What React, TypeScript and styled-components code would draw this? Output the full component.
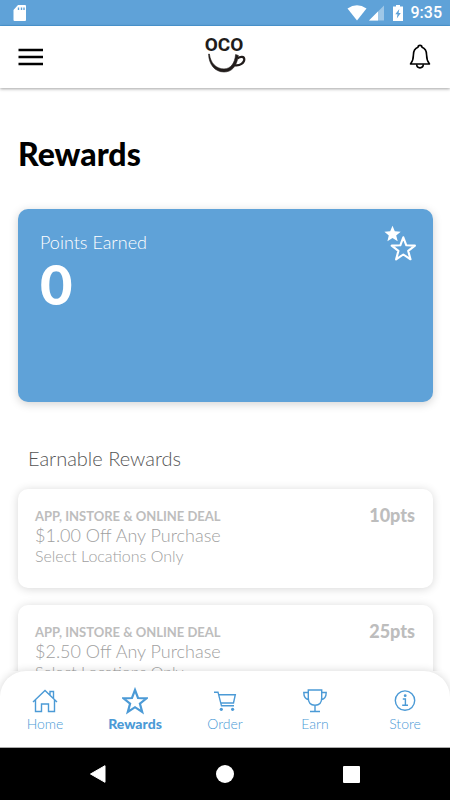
import React from "react";
import styled, { createGlobalStyle } from "styled-components";

const BLUE = "#5fa2d8";
const NAV_BLUE = "#4b9ad6";

const GlobalStyle = createGlobalStyle`
  * { box-sizing: border-box; }
  body {
    margin: 0;
    background: #fff;
    font-family: Lato, "Open Sans", sans-serif;
  }
  h1, h2, h3, p, ul { margin: 0; padding: 0; }
  button { border: 0; padding: 0; background: none; cursor: pointer; color: inherit; font: inherit; }
  svg { display: block; }
`;

const Screen = styled.div`
  display: flex;
  flex-direction: column;
  height: 100vh;
  overflow: hidden;
`;

const StatusBar = styled.div`
  flex: none;
  display: flex;
  align-items: center;
  justify-content: space-between;
  height: 26px;
  padding: 0 8px 0 12px;
  border-bottom: 1px solid ${NAV_BLUE};
  background: ${BLUE};
  color: #fff;
`;

const StatusIcons = styled.div`
  display: flex;
  align-items: center;
`;

const Clock = styled.time`
  margin-left: 6px;
  font: 500 16px/26px Roboto, sans-serif;
`;

const Header = styled.header`
  flex: none;
  display: grid;
  grid-template-columns: 1fr auto 1fr;
  align-items: center;
  height: 62px;
  padding: 0 18px;
  background: #fff;
  box-shadow: 0 1px 3px rgba(0, 0, 0, 0.36);
  z-index: 1;
`;

const IconButton = styled.button<{ $align?: "start" | "center" | "end" }>`
  justify-self: ${(p) => p.$align ?? "center"};
`;

const Main = styled.main`
  flex: 1;
  min-height: 0;
  overflow: hidden;
  padding: 48px 17px 0 18px;
`;

const Title = styled.h1`
  font-size: 32px;
  line-height: 36px;
  font-weight: 900;
  color: #000;
`;

const PointsCard = styled.section`
  display: flex;
  justify-content: space-between;
  align-items: flex-start;
  min-height: 193px;
  margin-top: 37px;
  padding: 16px 16px 16px 22px;
  border-radius: 10px;
  background: ${BLUE};
  color: #fff;
  box-shadow: 0 2px 10px rgba(0, 0, 0, 0.18);
`;

const PointsLabel = styled.h2`
  font-size: 18px;
  line-height: 34px;
  font-weight: 300;
`;

const PointsValue = styled.p`
  font-size: 56px;
  line-height: 50px;
  font-weight: 900;
`;

const SectionTitle = styled.h2`
  margin-top: 44px;
  padding-left: 10px;
  font-size: 20px;
  line-height: 24px;
  font-weight: 300;
  color: #555;
`;

const RewardList = styled.ul`
  display: flex;
  flex-direction: column;
  gap: 17px;
  margin-top: 19px;
  list-style: none;
`;

const RewardCard = styled.li`
  display: flex;
  justify-content: space-between;
  align-items: flex-start;
  min-height: 99px;
  padding: 17px 18px 17px 17px;
  border-radius: 10px;
  background: #fff;
  box-shadow: 0 1px 10px rgba(0, 0, 0, 0.16);
  color: #bdbdbd;
`;

const DealKind = styled.p`
  font-size: 13px;
  line-height: 20px;
  font-weight: 700;
`;

const DealName = styled.h3`
  font-size: 18px;
  line-height: 18px;
  font-weight: 300;
  color: #a0a0a0;
`;

const DealNote = styled.p`
  font-size: 16px;
  line-height: 24px;
  font-weight: 300;
  color: #a0a0a0;
`;

const DealPoints = styled.p`
  font-size: 18px;
  line-height: 18px;
  font-weight: 900;
`;

const TabBar = styled.nav`
  flex: none;
  display: grid;
  grid-template-columns: repeat(5, 1fr);
  height: 77px;
  padding-top: 16px;
  border-bottom: 1px solid #aaa;
  border-radius: 26px 26px 0 0;
  background: #fff;
  box-shadow: 0 0 8px rgba(0, 0, 0, 0.16);
  z-index: 1;
`;

const Tab = styled.a<{ $active?: boolean }>`
  display: flex;
  flex-direction: column;
  align-items: center;
  color: ${NAV_BLUE};
  text-decoration: none;
  font-size: 14px;
  line-height: 18px;
  font-weight: ${(p) => (p.$active ? 900 : 300)};
`;

const SystemBar = styled.div`
  flex: none;
  display: grid;
  grid-template-columns: repeat(3, 1fr);
  justify-items: center;
  align-items: center;
  height: 52px;
  padding: 0 35px;
  background: #000;
  color: #fff;
`;

const STAR = "M13 2 L16 10 L24.6 10.3 L17.9 15.6 L20.2 24 L13 19.2 L5.8 24 L8.1 15.6 L1.4 10.3 L10 10 Z";

const line = { fill: "none", stroke: "currentColor", strokeWidth: 1.4 };

const HomeIcon = () => (
  <svg width="26" height="28" viewBox="0 0 26 28" aria-hidden="true" {...line}>
    <path d="M1 15 L13 3.5 L25 15 M3.5 13 V24.5 H9.5 V17 H16.5 V24.5 H22.5 V13 M18 8 V4.5 H21.5 V11.5" />
  </svg>
);

const StarIcon = () => (
  <svg width="26" height="28" viewBox="0 0 26 28" aria-hidden="true" {...line} strokeWidth={2.2}>
    <path transform="translate(0 1)" d={STAR} />
  </svg>
);

const CartIcon = () => (
  <svg width="26" height="28" viewBox="0 0 26 28" aria-hidden="true" {...line}>
    <path d="M2 5.2 H6 L9.5 18.8 H22 M6.8 7.7 H23.3 L21.5 16 H9" />
    <circle cx="9.3" cy="22.3" r="1.6" fill="currentColor" stroke="none" />
    <circle cx="20.6" cy="22.3" r="1.6" fill="currentColor" stroke="none" />
  </svg>
);

const TrophyIcon = () => (
  <svg width="26" height="28" viewBox="0 0 26 28" aria-hidden="true" {...line}>
    <path d="M6.3 3 H19.7 V11 C19.7 15.5 17 18.2 13 18.2 C9 18.2 6.3 15.5 6.3 11 Z M13 18.2 V24.3 M8 24.5 H18 M6.3 5.5 H1.8 C1.8 9.5 3.4 12 6.6 12.7 M19.7 5.5 H24.2 C24.2 9.5 22.6 12 19.4 12.7" />
  </svg>
);

const InfoIcon = () => (
  <svg width="26" height="28" viewBox="0 0 26 28" aria-hidden="true" {...line}>
    <circle cx="13" cy="13.6" r="9.7" />
    <path d="M10.8 12 H13.4 V18 M10.2 18.2 H16" />
    <circle cx="13.2" cy="8.7" r="1.4" fill="currentColor" stroke="none" />
  </svg>
);

const Logo = () => (
  <svg width="48" height="52" viewBox="-2 -4 48 52" role="img" aria-label="OCO">
    <text
      x="21"
      y="16"
      textAnchor="middle"
      fontFamily="Roboto, sans-serif"
      fontWeight="700"
      fontSize="19"
      fill="#211c1b"
    >
      OCO
    </text>
    <path
      d="M5.6 19 C5.8 29 11.5 37 21 37 C28.5 37 33.6 32 35.4 20.5 L32.6 19.5 C31.8 28.5 27.5 33.9 21 33.9 C13 33.9 7.5 28 6.4 19 Z"
      fill="#211c1b"
      stroke="#211c1b"
      strokeWidth="0.6"
    />
    <path
      d="M34.5 23.5 C37.5 21 41.3 21.3 41.3 24.3 C41.3 28 37 31 32 30.3"
      fill="none"
      stroke="#211c1b"
      strokeWidth="2.2"
    />
  </svg>
);

const tabs = [
  { label: "Home", Icon: HomeIcon },
  { label: "Rewards", Icon: StarIcon },
  { label: "Order", Icon: CartIcon },
  { label: "Earn", Icon: TrophyIcon },
  { label: "Store", Icon: InfoIcon },
];

const rewards = [
  { name: "$1.00 Off Any Purchase", points: "10pts" },
  { name: "$2.50 Off Any Purchase", points: "25pts" },
];

export default function App() {
  return (
    <Screen>
      <GlobalStyle />
      <StatusBar>
        <svg width="15" height="18" viewBox="0 0 15 18" aria-hidden="true">
          <path d="M6 1 H13 Q14 1 14 2 V16 Q14 17 13 17 H2.5 Q1.5 17 1.5 16 V6 Z" fill="#fff" />
          <path d="M6.5 3.5 V6 M9.5 3.5 V6 M12 3.5 V6" stroke={BLUE} strokeWidth="1.4" />
        </svg>
        <StatusIcons>
          <svg width="58" height="18" viewBox="0 0 58 18" aria-hidden="true" fill="#fff">
            <path d="M0.5 4.5 Q10 -2 19.5 4.5 L10 16.5 Z" />
            <path d="M37 1.5 V16.5 H22 Z" opacity="0.4" />
            <path d="M31 7.5 V16.5 H22 Z" />
            <path d="M49 1 H53 V2.5 H56 V17 H46 V2.5 H49 Z" />
            <path d="M52.3 5 L48.3 10.3 H50.5 L49.8 14.5 L53.8 9 H51.6 Z" fill={BLUE} />
          </svg>
          <Clock>9:35</Clock>
        </StatusIcons>
      </StatusBar>
      <Header>
        <IconButton $align="start" type="button" aria-label="Menu">
          <svg width="26" height="20" viewBox="0 0 26 20" aria-hidden="true">
            <path d="M0.5 3 H25 M0.5 10 H25 M0.5 17 H25" stroke="#000" strokeWidth="2.6" />
          </svg>
        </IconButton>
        <Logo />
        <IconButton $align="end" type="button" aria-label="Notifications">
          <svg width="24" height="26" viewBox="1 0 24 26" aria-hidden="true" fill="none" stroke="#000" strokeWidth="1.6">
            <path d="M11 3.3 C11 0.7 15 0.7 15 3.3 C18.6 4.5 19.6 7.5 19.6 11 C19.6 15.5 20.5 17.5 22.5 20 H3.5 C5.5 17.5 6.4 15.5 6.4 11 C6.4 7.5 7.4 4.5 11 3.3 Z" strokeLinejoin="round" />
            <path d="M9.7 20.3 C9.7 25 16.3 25 16.3 20.3" />
          </svg>
        </IconButton>
      </Header>
      <Main>
        <Title>Rewards</Title>
        <PointsCard>
          <div>
            <PointsLabel>Points Earned</PointsLabel>
            <PointsValue>0</PointsValue>
          </div>
          <svg width="34" height="38" viewBox="0 0 34 38" aria-hidden="true">
            <path d="M9.5 0.8 L11.8 6.3 L17.7 6.7 L13.2 10.5 L14.7 16.2 L9.5 13.1 L4.4 16.2 L5.8 10.5 L1.4 6.7 L7.2 6.3 Z" fill="#fff" />
            <path transform="translate(7.3 10.3)" d={STAR} fill={BLUE} stroke="#fff" strokeWidth="2.1" strokeLinejoin="round" />
          </svg>
        </PointsCard>
        <SectionTitle>Earnable Rewards</SectionTitle>
        <RewardList>
          {rewards.map((r) => (
            <RewardCard key={r.points}>
              <div>
                <DealKind>APP, INSTORE &amp; ONLINE DEAL</DealKind>
                <DealName>{r.name}</DealName>
                <DealNote>Select Locations Only</DealNote>
              </div>
              <DealPoints>{r.points}</DealPoints>
            </RewardCard>
          ))}
        </RewardList>
      </Main>
      <TabBar>
        {tabs.map(({ label, Icon }) => (
          <Tab key={label} href="#" $active={label === "Rewards"} aria-current={label === "Rewards" ? "page" : undefined}>
            <Icon />
            {label}
          </Tab>
        ))}
      </TabBar>
      <SystemBar>
        <IconButton type="button" aria-label="Back">
          <svg width="18" height="20" viewBox="0 0 18 20" aria-hidden="true">
            <path d="M1.5 10 L16 1.7 V18.3 Z" fill="#fff" stroke="#fff" strokeLinejoin="round" />
          </svg>
        </IconButton>
        <IconButton type="button" aria-label="Home">
          <svg width="18" height="18" viewBox="0 0 18 18" aria-hidden="true">
            <circle cx="9" cy="9" r="9" fill="#fff" />
          </svg>
        </IconButton>
        <IconButton type="button" aria-label="Recent apps">
          <svg width="17" height="17" viewBox="0 0 17 17" aria-hidden="true">
            <rect width="17" height="17" rx="1" fill="#fff" />
          </svg>
        </IconButton>
      </SystemBar>
    </Screen>
  );
}
